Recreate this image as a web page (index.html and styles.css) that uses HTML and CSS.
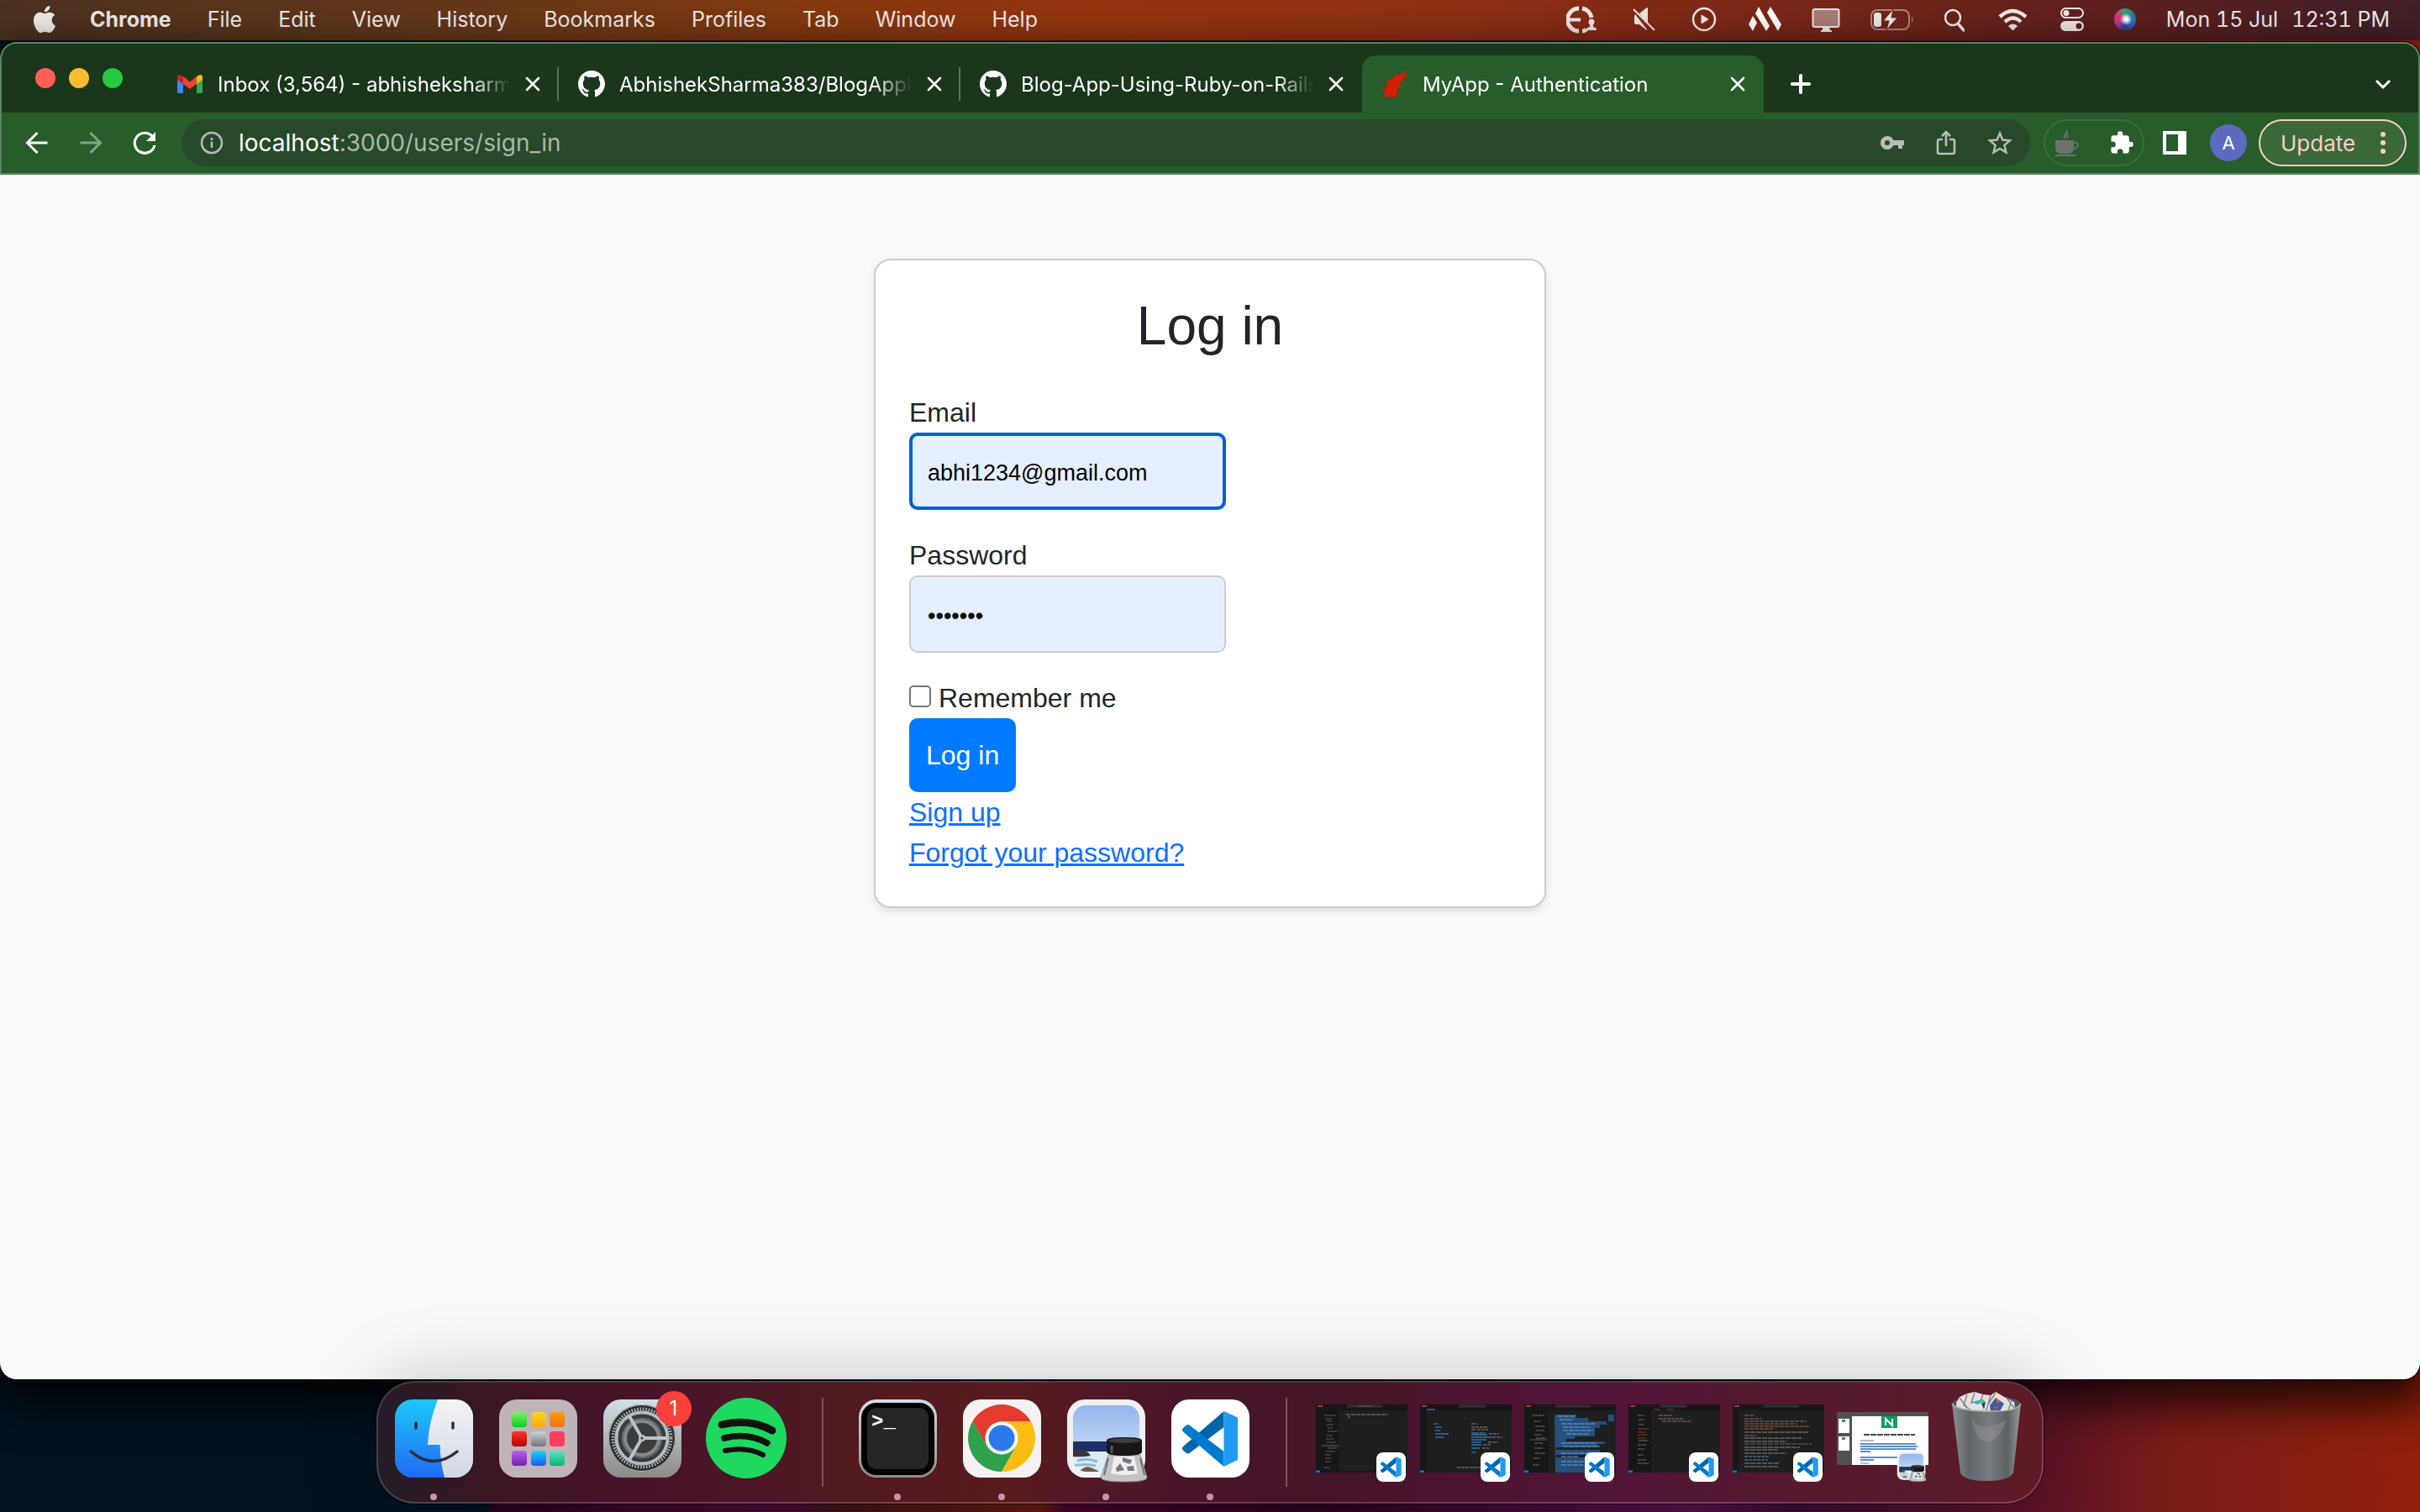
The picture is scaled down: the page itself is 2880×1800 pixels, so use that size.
FILE: index.html
```html
<!DOCTYPE html>
<html lang="en">
<head>
<meta charset="utf-8">
<title>MyApp - Authentication</title>
<link rel="stylesheet" href="styles.css">
</head>
<body>
<svg class="sprite" aria-hidden="true">
  <symbol id="github" viewBox="0 0 16 16"><path d="M8 0C3.58 0 0 3.58 0 8c0 3.54 2.29 6.53 5.47 7.59.4.07.55-.17.55-.38 0-.19-.01-.82-.01-1.49-2.01.37-2.53-.49-2.69-.94-.09-.23-.48-.94-.82-1.13-.28-.15-.68-.52-.01-.53.63-.01 1.08.58 1.23.82.72 1.21 1.87.87 2.33.66.07-.52.28-.87.51-1.07-1.78-.2-3.64-.89-3.64-3.95 0-.87.31-1.59.82-2.15-.08-.2-.36-1.02.08-2.12 0 0 .67-.21 2.2.82.64-.18 1.32-.27 2-.27s1.36.09 2 .27c1.53-1.04 2.2-.82 2.2-.82.44 1.1.16 1.92.08 2.12.51.56.82 1.27.82 2.15 0 3.07-1.87 3.75-3.65 3.95.29.25.54.73.54 1.48 0 1.07-.01 1.93-.01 2.2 0 .21.15.46.55.38A8.01 8.01 0 0 0 16 8c0-4.42-3.58-8-8-8z" fill="#fff"/></symbol>
  <symbol id="cross" viewBox="0 0 20 20"><path d="M3 3l14 14M17 3L3 17" stroke="#fff" stroke-width="2.6" stroke-linecap="round"/></symbol>
  <symbol id="vscode" viewBox="0 0 93 93">
    <rect width="93" height="93" rx="21" fill="#fff"/>
    <path d="M62.500 14L14 56q-2 2.500 0 4.500l4 3.500q2 1 4-.500L62.500 33z" fill="#0065a9"/>
    <path d="M62.500 80L14 38.500q-2-2.500 0-4.500l4-3.500q2-1 4 .500L62.500 62z" fill="#007acc"/>
    <path d="M62.500 14L79 21.500v50.500L62.500 80z" fill="#1f9cf0"/>
  </symbol>
  <symbol id="preview" viewBox="0 0 96 99">
    <rect width="93" height="93" rx="21" fill="#eff0f2"/>
    <clipPath id="photo"><rect x="7" y="7" width="79" height="79" rx="15"/></clipPath>
    <g clip-path="url(#photo)">
      <rect x="7" y="7" width="79" height="44" fill="url(#sky)"/>
      <rect x="7" y="50" width="79" height="14" fill="#1f2f66"/>
      <rect x="7" y="62" width="79" height="26" fill="#dcebf5"/>
      <path d="M7 61q9-2 18 2l3 4q-10 2-21 1z" fill="#39343c"/>
      <path d="M12 73q12-4 24 1M8 79q14-3 26 0" stroke="#8eb9d6" stroke-width="3" fill="none"/>
      <path d="M14 86q8-8 14-5l9 4v3H14z" fill="#6d5a48"/>
    </g>
    <path d="M49 66h38l8 27q0 5-27 5t-28-5z" fill="#c3c4c6" stroke="#8e8f91"/>
    <path d="M56 68h24l4 20q-16 4-32 0z" fill="#eceef0"/>
    <path d="M49 70l-5 20M87 70l5 20" stroke="#707173" stroke-width="2"/>
    <path d="M66 69l11 3-2 5-9-3zM58 82l5-6 5 8-9 2zM71 80l8-1 1 6-8 0z" fill="#76797e"/>
    <path d="M47 49q0-4 21-4t21 4v13q0 5-21 5t-21-5z" fill="#17181a"/>
    <ellipse cx="68" cy="49" rx="19" ry="3" fill="#3c3d40"/>
    <path d="M53 55v9" stroke="#53555a" stroke-width="3"/>
  </symbol>
  <defs>
    <linearGradient id="sky" x2="0" y2="1"><stop stop-color="#92b6ee"/><stop offset="1" stop-color="#bcd2f3"/></linearGradient>
    <linearGradient id="finderBlue" x2="0" y2="1"><stop stop-color="#1dc8fd"/><stop offset="1" stop-color="#1f6bf3"/></linearGradient>
    <linearGradient id="finderWhite" x2="0" y2="1"><stop stop-color="#f4f4f5"/><stop offset="1" stop-color="#cfd8e4"/></linearGradient>
    <linearGradient id="metal" x2="0" y2="1"><stop stop-color="#d3dfe6"/><stop offset="1" stop-color="#8d8a86"/></linearGradient>
    <linearGradient id="can" x2="1" y2="0"><stop stop-color="#8b8f92"/><stop offset=".25" stop-color="#62666a"/><stop offset=".55" stop-color="#7b7e81"/><stop offset=".8" stop-color="#5d6063"/><stop offset="1" stop-color="#999c9f"/></linearGradient>
    <linearGradient id="lime" x2="0" y2="1"><stop stop-color="#7df06c"/><stop offset="1" stop-color="#12cc1c"/></linearGradient>
    <linearGradient id="amber" x2="0" y2="1"><stop stop-color="#fdd22c"/><stop offset="1" stop-color="#fdab05"/></linearGradient>
    <linearGradient id="orange" x2="0" y2="1"><stop stop-color="#fc9c06"/><stop offset="1" stop-color="#ec7320"/></linearGradient>
    <linearGradient id="crimson" x2="0" y2="1"><stop stop-color="#fb3226"/><stop offset="1" stop-color="#b60303"/></linearGradient>
    <linearGradient id="silver" x2="0" y2="1"><stop stop-color="#c8d4da"/><stop offset="1" stop-color="#757575"/></linearGradient>
    <linearGradient id="violet" x2="0" y2="1"><stop stop-color="#c05bee"/><stop offset="1" stop-color="#7224ae"/></linearGradient>
    <linearGradient id="azure" x2="0" y2="1"><stop stop-color="#1bd6fd"/><stop offset="1" stop-color="#1e55ee"/></linearGradient>
    <linearGradient id="mint" x2="0" y2="1"><stop stop-color="#5ee0cc"/><stop offset="1" stop-color="#05b66c"/></linearGradient>
  </defs>
</svg>

<header class="menubar">
  <nav class="menus" aria-label="Menu bar">
    <svg class="apple" viewBox="0 0 24 24"><path d="M12.152 6.896c-.948 0-2.415-1.078-3.96-1.040-2.040.027-3.910 1.183-4.961 3.014-2.117 3.675-.546 9.103 1.519 12.090 1.013 1.454 2.208 3.090 3.792 3.039 1.520-.065 2.090-.987 3.935-.987 1.831 0 2.350.987 3.960.948 1.637-.026 2.676-1.480 3.676-2.948 1.156-1.688 1.636-3.325 1.662-3.415-.039-.013-3.182-1.221-3.220-4.857-.026-3.040 2.480-4.494 2.597-4.559-1.429-2.090-3.623-2.324-4.390-2.376-2-.156-3.675 1.090-4.610 1.090zM15.530 3.830c.843-1.012 1.400-2.427 1.245-3.830-1.207.052-2.662.805-3.532 1.818-.780.896-1.454 2.338-1.273 3.714 1.338.104 2.715-.688 3.559-1.701"/></svg>
    <button class="menu menu-app">Chrome</button>
    <button class="menu">File</button>
    <button class="menu">Edit</button>
    <button class="menu">View</button>
    <button class="menu">History</button>
    <button class="menu">Bookmarks</button>
    <button class="menu">Profiles</button>
    <button class="menu">Tab</button>
    <button class="menu">Window</button>
    <button class="menu">Help</button>
  </nav>
  <div class="status">
    <svg width="38" height="34" viewBox="0 0 38 34" fill="none" stroke="#f0e8e6" stroke-width="5"><path d="M15 4A13.500 13.500 0 0 0 15 31M19 4A13.500 13.500 0 0 1 30 15"/><path d="M3 17.500h14" stroke-width="4"/><path d="M19 31q3 0 5-2"/><g fill="#f0e8e6" stroke="none"><circle cx="30" cy="20" r="3.500"/><path d="M28 22h4v4q5 1 4 4H24q-1-3 4-4z"/></g></svg>
    <svg width="38" height="34" viewBox="0 0 38 34" fill="#f0e8e6"><path d="M8 11l14 18q0 1-1 .500L13 23H9q-2 0-2-2v-8zM13 10l9-7q1-.500 1 1v18z"/><path d="M6 5l25 25" stroke="#f0e8e6" stroke-width="2"/></svg>
    <svg width="32" height="34" viewBox="0 0 32 34" fill="none" stroke="#f0e8e6" stroke-width="2.500"><circle cx="16" cy="17" r="13"/><path d="M13 12v10l8-5z" fill="#f0e8e6" stroke-width="1"/></svg>
    <svg width="40" height="34" viewBox="0 0 40 34" fill="#fff"><path d="M6 13l5 8-5 10-5-8zM13 2l13 23-4 6L9 10zM27 2l13 21-4 8L23 9z"/></svg>
    <svg width="34" height="34" viewBox="0 0 34 34"><rect x="1.500" y="5" width="31" height="21" rx="2" fill="#f0e8e6" fill-opacity=".45" stroke="#f0e8e6" stroke-width="2"/><path d="M13 26h8l1 4h2v2H11v-2h2z" fill="#f0e8e6"/></svg>
    <svg width="52" height="34" viewBox="0 0 52 34"><rect x="1" y="6" width="45" height="23" rx="7" fill="none" stroke="#f0e8e6" stroke-opacity=".5" stroke-width="2"/><path d="M49 13q3 4 0 8z" fill="#f0e8e6" fill-opacity=".5"/><rect x="4" y="9" width="9" height="17" rx="3" fill="#f0e8e6"/><path d="M27 5L15 19h7l-3 11 13-15h-7z" fill="#f0e8e6" stroke="#752819" stroke-width="1"/></svg>
    <svg width="24" height="34" viewBox="0 0 24 34" fill="none" stroke="#f0e8e6" stroke-width="2.500"><circle cx="10" cy="15" r="9"/><path d="M16 22l7 8" stroke-width="3.500" stroke-linecap="round"/></svg>
    <svg width="42" height="34" viewBox="0 0 42 34" fill="none" stroke="#f0e8e6" stroke-width="4.500"><path d="M6 14q15-14 31 0M12 20q10-9 19 0"/><path d="M21.500 30l-5-5q5-4 10 0z" fill="#f0e8e6" stroke-width="1"/></svg>
    <svg width="28" height="34" viewBox="0 0 28 34"><rect x="1" y="4" width="26" height="11" rx="5.500" fill="none" stroke="#f0e8e6" stroke-width="2"/><circle cx="7" cy="9.500" r="3.500" fill="#f0e8e6"/><rect y="19" width="28" height="12" rx="6" fill="#f0e8e6"/><circle cx="22" cy="25" r="3.500" fill="#5b2020"/></svg>
    <span class="siri"></span>
    <time class="clock"><span>Mon 15 Jul</span><span>12:31 PM</span></time>
  </div>
</header>

<main class="browser">
  <div class="chrome">
    <div class="tabstrip">
      <div class="lights"><i class="light red"></i><i class="light yellow"></i><i class="light green"></i></div>
      <div class="tab">
        <svg class="favicon" viewBox="0 0 32 32"><path d="M1 8v17q0 2 2 2h5V13z" fill="#4285f4"/><path d="M31 8v17q0 2-2 2h-5V13z" fill="#34a853"/><path d="M1 8q0-3 3-3l4 2v9l-7-5z" fill="#c5221f"/><path d="M31 8q0-3-3-3l-4 2v9l7-5z" fill="#fbbc04"/><path d="M8 7l8 6.500L24 7v9l-8 6-8-6z" fill="#ea4335"/></svg>
        <span class="tab-title">Inbox (3,564) - abhisheksharma</span>
        <button class="icon-btn tab-close" aria-label="Close tab"><svg width="20" height="20"><use href="#cross"/></svg></button>
      </div>
      <div class="tab">
        <svg class="favicon"><use href="#github"/></svg>
        <span class="tab-title">AbhishekSharma383/BlogApplication</span>
        <button class="icon-btn tab-close" aria-label="Close tab"><svg width="20" height="20"><use href="#cross"/></svg></button>
      </div>
      <div class="tab tab-last">
        <svg class="favicon"><use href="#github"/></svg>
        <span class="tab-title">Blog-App-Using-Ruby-on-Rails</span>
        <button class="icon-btn tab-close" aria-label="Close tab"><svg width="20" height="20"><use href="#cross"/></svg></button>
      </div>
      <div class="tab tab-active">
        <svg class="favicon" viewBox="0 0 32 32" fill="#d81e05"><path d="M3 31Q5 17 12 10 19 3 31 4v2Q20 10 18 31z"/><path d="M1 19l3 1v4l-3-1zM7 10l3 2-1 3-3-2zM15 4l3 0 1 2-3 1zM24 1h4l-1 2h-3zM24 12l3 1v2l-3-1zM21 17l3 1v3l-3-1zM20 27l2 1v2l-2-1z"/></svg>
        <span class="tab-title">MyApp - Authentication</span>
        <button class="icon-btn tab-close" aria-label="Close tab"><svg width="20" height="20"><use href="#cross"/></svg></button>
      </div>
      <button class="icon-btn new-tab" aria-label="New tab"><svg width="24" height="24" viewBox="0 0 24 24"><path d="M12 2v20M2 12h20" stroke="#fff" stroke-width="4" stroke-linecap="round"/></svg></button>
      <button class="icon-btn tab-search" aria-label="Search tabs"><svg width="20" height="14" viewBox="0 0 20 14" fill="none"><path d="M2 3l8 8 8-8" stroke="#fff" stroke-width="3"/></svg></button>
    </div>
    <div class="toolbar">
      <button class="icon-btn nav-btn" aria-label="Back"><svg width="28" height="28" viewBox="0 0 28 28" fill="none" stroke="#fff" stroke-width="3"><path d="M26.500 14H3M14.500 2L2.500 14l12 12"/></svg></button>
      <button class="icon-btn nav-btn" aria-label="Forward"><svg width="28" height="28" viewBox="0 0 28 28" fill="none" stroke="#84a285" stroke-width="3"><path d="M1.500 14H25M13.500 2l12 12-12 12"/></svg></button>
      <button class="icon-btn nav-btn" aria-label="Reload"><svg width="28" height="28" viewBox="0 0 28 28" fill="none" stroke="#fff" stroke-width="3.200"><path d="M23.500 6.500A12 12 0 1 0 26 17"/><path d="M27 1v11H16z" fill="#fff" stroke="none"/></svg></button>
      <div class="omnibox">
        <svg width="28" height="28" viewBox="0 0 28 28" fill="none" stroke="#b5b9bd" stroke-width="2.600"><circle cx="14" cy="14" r="12"/><path d="M14 12.500V20M14 8v3"/></svg>
        <span class="url"><b>localhost</b>:3000/users/sign_in</span>
        <button class="icon-btn omni-btn" aria-label="Passwords"><svg width="28" height="18" viewBox="0 0 28 18" fill="#b9bcbb"><path fill-rule="evenodd" d="M8 1a8 8 0 1 0 7.300 11H21v4h5v-4h2V6H15.300A8 8 0 0 0 8 1zm0 5a3 3 0 1 1 0 6 3 3 0 0 1 0-6z"/></svg></button>
        <button class="icon-btn omni-btn" aria-label="Share"><svg width="24" height="30" viewBox="0 0 24 30" fill="none" stroke="#b9bcbb" stroke-width="2.600"><path d="M8 11H4q-2 0-2 2v13q0 2 2 2h16q2 0 2-2V13q0-2-2-2h-4M12 19V3M7 7l5-5 5 5"/></svg></button>
        <button class="icon-btn omni-btn" aria-label="Bookmark"><svg width="30" height="30" viewBox="0 0 30 30" fill="none" stroke="#b9bcbb" stroke-width="2.500"><path d="M15 3.500l3.300 8 8.700.700-6.600 5.700 2 8.500L15 22l-7.400 4.400 2-8.500L3 12.200l8.700-.700z"/></svg></button>
      </div>
      <div class="extensions">
        <button class="icon-btn" aria-label="Coffee extension"><svg width="32" height="34" viewBox="0 0 32 34" fill="#6e7370"><path d="M2 14h22v8q0 8-7 8H9q-7 0-7-8zM2 31h24v2H2z"/><path d="M24 17q6-1 5 3t-7 4" fill="none" stroke="#6e7370" stroke-width="2"/><path d="M14 12q-3-3 0-5t1-5M17 11q-2-2 0-4" fill="none" stroke="#6e7370" stroke-width="2"/></svg></button>
        <button class="icon-btn" aria-label="Extensions"><svg width="30" height="30" viewBox="0 0 24 24" fill="#fff"><path d="M20.500 11H19V7c0-1.100-.900-2-2-2h-4V3.500a2.500 2.500 0 0 0-5 0V5H4c-1.100 0-2 .900-2 2v3.800h1.500a2.700 2.700 0 0 1 0 5.400H2V20c0 1.100.900 2 2 2h3.800v-1.500a2.700 2.700 0 0 1 5.400 0V22H17c1.100 0 2-.900 2-2v-4h1.500a2.500 2.500 0 0 0 0-5z"/></svg></button>
      </div>
      <button class="icon-btn panel-btn" aria-label="Side panel"><svg width="28" height="28" viewBox="0 0 28 28" fill="#fff"><path fill-rule="evenodd" d="M0 0h28v28H0zM4 4v20h14V4z"/></svg></button>
      <button class="avatar">A</button>
      <button class="update">Update<svg width="8" height="28" viewBox="0 0 8 28" fill="#f9cfc6"><circle cx="4" cy="4" r="3"/><circle cx="4" cy="14" r="3"/><circle cx="4" cy="24" r="3"/></svg></button>
    </div>
  </div>

  <section class="page">
    <form class="card">
      <h2>Log in</h2>
      <div class="field">
        <label for="email">Email</label>
        <input class="textbox focused" id="email" type="email" value="abhi1234@gmail.com">
      </div>
      <div class="field">
        <label for="password">Password</label>
        <input class="textbox" id="password" type="password" value="abhi123">
      </div>
      <div class="remember">
        <input type="checkbox" id="remember"><label for="remember">Remember me</label>
      </div>
      <button class="submit" type="button">Log in</button>
      <a href="#signup">Sign up</a>
      <a href="#forgot">Forgot your password?</a>
    </form>
  </section>
</main>

<footer class="dock-area">
  <div class="dock">
    <div class="slot running"><svg width="93" height="93" viewBox="0 0 93 93">
      <clipPath id="tile"><rect width="93" height="93" rx="21"/></clipPath>
      <g clip-path="url(#tile)"><rect width="93" height="93" fill="url(#finderBlue)"/><path d="M51 0Q40 28 39 54h14.500Q54 75 59 93h34V0z" fill="url(#finderWhite)"/></g>
      <path d="M25 28v6M69 28v6M19 62q27 23 55 0" fill="none" stroke="#2c2d33" stroke-width="3.500" stroke-linecap="round"/></svg></div>
    <div class="slot"><svg width="93" height="93" viewBox="0 0 93 93"><rect width="93" height="93" rx="21" fill="#c0b3ba"/>
      <rect x="15" y="15" width="18" height="18" rx="4" fill="url(#lime)"/><rect x="38" y="15" width="18" height="18" rx="4" fill="url(#amber)"/><rect x="60" y="15" width="18" height="18" rx="4" fill="url(#orange)"/>
      <rect x="15" y="38" width="18" height="18" rx="4" fill="url(#crimson)"/><rect x="38" y="38" width="18" height="18" rx="4" fill="url(#silver)"/><rect x="60" y="38" width="18" height="18" rx="4" fill="#fc3e5c"/>
      <rect x="15" y="61" width="18" height="18" rx="4" fill="url(#violet)"/><rect x="38" y="61" width="18" height="18" rx="4" fill="url(#azure)"/><rect x="60" y="61" width="18" height="18" rx="4" fill="url(#mint)"/></svg></div>
    <div class="slot"><span class="badged"><svg width="93" height="93" viewBox="0 0 93 93"><rect width="93" height="93" rx="21" fill="url(#metal)"/>
      <circle cx="46" cy="46" r="40" fill="#2a2c2e"/><circle cx="46" cy="46" r="39.500" fill="none" stroke="#c3cacd" stroke-width="1"/>
      <circle cx="46" cy="46" r="34.500" fill="none" stroke="#a9afb2" stroke-width="4" stroke-dasharray="1.700 1.700"/>
      <circle cx="46" cy="46" r="30.500" fill="none" stroke="#b4babd" stroke-width="4"/>
      <circle cx="46" cy="46" r="28" fill="#3a3c3e"/>
      <circle cx="46" cy="46" r="23" fill="none" stroke="#888d90" stroke-width="2" stroke-dasharray="1.500 1"/>
      <circle cx="46" cy="46" r="20" fill="none" stroke="#85898c" stroke-width="4"/>
      <path d="M46 46h30M46 46L31 20M46 46L31 72" stroke="#bcc2c5" stroke-width="4"/><circle cx="46" cy="46" r="4" fill="#bcc2c5"/><circle cx="46" cy="46" r="1.500" fill="#333"/></svg><span class="badge">1</span></span></div>
    <div class="slot"><svg width="96" height="96" viewBox="0 0 96 96" fill="none" stroke="#121212" stroke-linecap="round"><circle cx="48" cy="48" r="48" fill="#1fd860" stroke="none"/><path d="M19 32Q52 24 79 39" stroke-width="9"/><path d="M22 48q28-7 51 6" stroke-width="7.500"/><path d="M23 63q26-5 45 5" stroke-width="6"/></svg></div>
    <span class="divider"></span>
    <div class="slot running"><svg width="93" height="93" viewBox="0 0 93 93"><rect width="93" height="93" rx="21" fill="url(#metal)"/><rect x="3" y="4" width="87" height="86" rx="18" fill="#000"/><rect x="10" y="10" width="73" height="73" rx="11" fill="#262626"/><text class="prompt" x="15" y="33">&gt;_</text></svg></div>
    <div class="slot running"><svg width="93" height="93" viewBox="0 0 93 93"><rect width="93" height="93" rx="21" fill="#f5f3f2"/>
      <path d="M46 46V26h34.600A40 40 0 0 0 11.400 26L28.700 56z" fill="#e33b2e"/><path d="M46 46L28.700 56 11.400 26A40 40 0 0 0 46 86L63.300 56z" fill="#2da14c"/><path d="M46 46l17.300 10L46 86A40 40 0 0 0 80.600 26H46z" fill="#fdbc12"/>
      <circle cx="46" cy="46" r="19.500" fill="#fff"/><circle cx="46" cy="46" r="15.500" fill="#2b7bee"/></svg></div>
    <div class="slot running"><svg class="preview-app" width="96" height="99"><use href="#preview"/></svg></div>
    <div class="slot running"><svg width="93" height="93"><use href="#vscode"/></svg></div>
    <span class="divider"></span>
    <div class="slot"><span class="badged"><svg class="thumb" viewBox="0 0 109 81"><rect width="109" height="81" fill="#1f1f1f"/><path d="M0 0h109v7H0zM0 7h27v72H0zM0 79h109v2H0z" fill="#171717"/><path d="M37 2h42" stroke="#333" stroke-width="3"/><path d="M10 13h14M11 17h8M13 20h6M13 24h8M14 28h6M14 32h12M13 37h7M12 41h9M13 45h11M14 52h12M12 56h11M11 60h7M11 64h8M11 68h6M9 75h8M50 2h18" stroke="#666" stroke-width="1" stroke-dasharray="3 .5"/><path d="M7 49h20" stroke="#3a3a42" stroke-width="2.500"/><path d="M36 12h50M38 15h3" stroke="#888" stroke-dasharray="5 1"/><path d="M0 80h5" stroke="#0078d4" stroke-width="3"/><path d="M2 2h6" stroke="#c85032" stroke-width="1.500"/></svg><svg class="mini"><use href="#vscode"/></svg></span></div>
    <div class="slot"><span class="badged"><svg class="thumb" viewBox="0 0 109 81"><rect width="109" height="81" fill="#1f1f1f"/><path d="M0 0h109v7H0zM0 7h7v74H0z" fill="#171717"/><path d="M46 2h32" stroke="#333" stroke-width="3"/><path d="M16 23h6M61 23h7M66 27h14M68 30h13M66 34h12M82 35h12M86 39h12M81 45h12M75 48h9M74 52h8M44 75h28" stroke="#888" stroke-dasharray="4 1"/><path d="M18 27h8M18 31h6M18 35h16M18 39h10M61 27h4M61 30h5M61 34h5M61 36h19M61 39h24M61 42h18M61 45h12M61 48h12M61 52h10M61 57h5M8 6h10" stroke="#2b73ad" stroke-width="1.300"/><path d="M0 80h5" stroke="#0078d4" stroke-width="3"/><path d="M2 2h6" stroke="#c85032" stroke-width="1.500"/></svg><svg class="mini"><use href="#vscode"/></svg></span></div>
    <div class="slot"><span class="badged"><svg class="thumb" viewBox="0 0 109 81"><rect width="109" height="81" fill="#1f1f1f"/><path d="M0 0h109v7H0zM0 7h29v74H0z" fill="#171717"/><path d="M37 2h42" stroke="#333" stroke-width="3"/><path d="M36 12h26v4h14v4h22v4h-8v4h-6v10H60v3H50v3h46v3h-8v4H38v3h52v3h8v3H38v3h50v3h-6v3h15v12H37z" fill="#264f7b"/><path d="M40 14h20M42 18h16M44 23h40M46 27h32M46 31h36M50 35h28M44 46h42M46 50h44M44 58h42M44 62h20M44 68h32M44 72h26" stroke="#6fa7d6" stroke-dasharray="6 1"/><path d="M10 13h14M12 20h8M13 26h12M14 31h10M12 36h8M14 40h12M12 46h10M12 52h10M13 58h12M11 64h8M10 72h8" stroke="#777" stroke-dasharray="3 .5"/><path d="M7 42h20" stroke="#3a3a42" stroke-width="2"/><path d="M100 12h7v8h-7z" fill="#264f7b"/><path d="M0 80h5" stroke="#0078d4" stroke-width="3"/><path d="M2 2h6" stroke="#c85032" stroke-width="1.500"/></svg><svg class="mini"><use href="#vscode"/></svg></span></div>
    <div class="slot"><span class="badged"><svg class="thumb" viewBox="0 0 109 81"><rect width="109" height="81" fill="#1f1f1f"/><path d="M0 0h109v7H0zM0 7h27v74H0z" fill="#171717"/><path d="M37 2h32" stroke="#333" stroke-width="3"/><path d="M36 13h16M40 20h34" stroke="#9c6b54" stroke-dasharray="5 1"/><path d="M36 17h30" stroke="#4d8fbf" stroke-dasharray="4 1"/><path d="M11 13h8M12 18h6M12 24h6M12 43h12M11 48h10M11 53h8M11 60h6M11 66h10M11 70h14" stroke="#777" stroke-dasharray="3 .5"/><path d="M11 29h14M11 33h10M11 36h12M11 40h10M30 6h8M46 6h8" stroke="#8a3a36"/><path d="M0 80h5" stroke="#0078d4" stroke-width="3"/><path d="M2 2h6" stroke="#c85032" stroke-width="1.500"/></svg><svg class="mini"><use href="#vscode"/></svg></span></div>
    <div class="slot"><span class="badged"><svg class="thumb" viewBox="0 0 109 81"><rect width="109" height="81" fill="#1f1f1f"/><path d="M0 0h109v7H0zM0 7h7v74H0z" fill="#171717"/><path d="M37 2h42" stroke="#333" stroke-width="3"/><path d="M14 13h12M14 17h20M14 20h74M14 23h62M14 26h78M14 29h34M14 37h14" stroke="#9c6b54" stroke-dasharray="5 1"/><path d="M14 33h76M14 40h68M14 44h50M14 51h66M14 54h40M14 58h50M14 70h42M14 74h40" stroke="#888" stroke-dasharray="6 1"/><path d="M14 47h80" stroke="#477a3f" stroke-dasharray="6 1"/><path d="M14 62h30M14 66h28" stroke="#4d8fbf" stroke-dasharray="4 1"/><path d="M0 80h5" stroke="#0078d4" stroke-width="3"/><path d="M2 2h6" stroke="#c85032" stroke-width="1.500"/></svg><svg class="mini"><use href="#vscode"/></svg></span></div>
    <div class="slot"><span class="badged"><svg class="thumb" viewBox="0 0 109 81"><rect y="9" width="109" height="63" fill="#fff"/><path d="M0 9h109v5H0zM0 14h18v58H0z" fill="#55504d"/><path d="M2 17h13v17H2zM2 38h13v17H2z" fill="#fff"/><path d="M53 14h19v14H53zM6 18h4v3H6zM6 39h4v3H6z" fill="#0f9d67"/><path d="M58 25v-8l8 8v-8" fill="none" stroke="#fff" stroke-width="2"/><path d="M32 36h61" stroke="#444" stroke-width="2" stroke-dasharray="7 1"/><path d="M28 43h16M28 70h10" stroke="#777"/><path d="M28 47h66M28 50h68M28 53h66M28 56h12M28 63h62M28 66h16" stroke="#5c8fcb" stroke-width="2"/></svg><svg class="mini mini-preview" viewBox="0 0 96 99"><use href="#preview"/></svg></span></div>
    <div class="slot trash"><svg width="84" height="108" viewBox="0 0 84 108"><ellipse cx="42" cy="15" rx="41" ry="9" fill="#505356"/>
      <path d="M6 14l4-7 9-4 9-2 10 3 9 1 6-4 12 7 10 5 1 8q-35 9-69 2z" fill="#e2e2e1"/>
      <path d="M10 8l10 13M19 4l-4 13 10 7M28 2l-4 12 12-3M38 4l-3 8M47 5l-5 18M53 2l-9 14M66 8l10 14M72 11l-4 12" stroke="#85878a" stroke-width="1.500" fill="none"/>
      <path d="M26 13l12-3 3 3-11 3z" fill="#27b8d8"/><path d="M33 10l6 1-3 3z" fill="#54c457"/><path d="M36 15l5-2-2 9z" fill="#3c3c3e"/>
      <path d="M46 17l7-9 10 7-5 9-11 0z" fill="#3e5ca6"/><path d="M53 8l6 4-4 3z" fill="#d55e35"/><path d="M50 18l6 1-2 4z" fill="#c94a33"/>
      <path d="M1 15q5 8 41 9t41-9l-9 82q-4 10-32 10T11 97z" fill="url(#can)"/><path d="M1 15q5 8 41 9t41-9" fill="none" stroke="#b1b4b6" stroke-width="1.500"/><path d="M24 32q8 14 22 10t20-8q-8 24-22 26T24 32z" fill="#a4a7aa" opacity=".3"/></svg></div>
  </div>
</footer>
</body>
</html>
```

FILE: styles.css
```css
* { box-sizing: border-box; }

body {
  margin: 0;
  min-height: 100vh;
  display: flex;
  flex-direction: column;
  font-family: Inter, "Liberation Sans", sans-serif;
  background: linear-gradient(to right, #02131f 0, #02131f 20%, #2b0020 20.500%, #4c0b32 33%, #3c1018 34%, #63190f 43%, #46002a 44%, #2c001c 54%, #55104a 70%, #3b0b30 74%, #5c1328 84%, #7a1c18 90%, #911f09 100%);
}

.sprite { position: absolute; width: 0; height: 0; }
svg { display: block; flex: none; }

button {
  border: 0;
  padding: 0;
  margin: 0;
  background: none;
  font: inherit;
  color: inherit;
}

.icon-btn { display: flex; align-items: center; justify-content: center; flex: none; }

/* Menu bar */
.menubar {
  height: 48px;
  flex: none;
  display: flex;
  align-items: center;
  justify-content: space-between;
  padding: 0 36px 2px 37px;
  font-size: 25px;
  color: #f2ebe8;
  background: linear-gradient(to right, #4b3120 0, #663819 20%, #84390f 33%, #973410 45%, #8f2f12 60%, #7c2817 72%, #61201e 86%, #402028 100%);
}
.menus { display: flex; align-items: center; gap: 43px; text-shadow: 0 2px 4px rgba(0, 0, 0, .3); }
.menu-app { font-weight: 700; }
.apple { width: 32px; height: 32px; margin-right: -5px; fill: #f0ebe8; }
.status { display: flex; align-items: center; gap: 36px; }
.siri {
  width: 26px;
  height: 26px;
  border-radius: 50%;
  background:
    radial-gradient(circle at 55% 50%, #fff 0 10%, transparent 38%),
    conic-gradient(#2aa775, #2b7a9a, #2a6fd0, #23408f, #b43a9d, #e0356d, #2aa775);
}
.clock { display: flex; gap: 16px; font-variant-numeric: tabular-nums; }

/* Browser window */
.browser {
  flex: 1;
  display: flex;
  flex-direction: column;
  margin-top: 2px;
  border-radius: 20px;
  box-shadow: 0 0 0 1px #000, 0 20px 50px 10px rgba(0, 0, 0, .75);
}
.chrome {
  border: 2px solid #5b8562;
  border-radius: 20px 20px 0 0;
  background: #275c2b;
  overflow: hidden;
  color: #fff;
}
.tabstrip {
  display: flex;
  align-items: flex-end;
  height: 82px;
  padding: 0 30px 0 40px;
  background: #1a371b;
}
.lights { display: flex; gap: 16px; width: 145px; height: 82px; padding-top: 29px; flex: none; }
.light { width: 24px; height: 24px; border-radius: 50%; }
.red { background: #ff5f57; }
.yellow { background: #febc2e; }
.green { background: #28c840; }

.tab {
  position: relative;
  display: flex;
  align-items: center;
  flex: 0 1 478px;
  min-width: 0;
  height: 68px;
  padding: 0 18px 0 23px;
  font-size: 24px;
}
.tab::after {
  content: "";
  position: absolute;
  right: 0;
  top: 14px;
  width: 2px;
  height: 40px;
  background: #587158;
}
.tab-last::after, .tab-active::after { display: none; }
.tab-active { background: #275c2b; border-radius: 16px 16px 0 0; }
.favicon { width: 32px; height: 32px; margin-right: 17px; }
.tab-title {
  flex: 1;
  min-width: 0;
  overflow: hidden;
  white-space: nowrap;
  mask-image: linear-gradient(to left, transparent 0, #000 44px);
}
.tab-close { width: 26px; height: 26px; margin-left: 14px; }
.new-tab { width: 88px; height: 68px; }
.tab-search { width: 24px; height: 68px; margin-left: auto; }

.toolbar {
  display: flex;
  align-items: center;
  height: 72px;
  padding: 0 14px 0 10px;
}
.nav-btn { width: 64px; height: 56px; }
.omnibox {
  flex: 1;
  display: flex;
  align-items: center;
  height: 56px;
  margin: 0 16px 0 12px;
  padding: 0 4px 0 22px;
  border-radius: 28px;
  background: #274929;
}
.url { flex: 1; margin-left: 18px; font-size: 28px; color: #a9b8aa; }
.url b { font-weight: 400; color: #fff; }
.omni-btn { width: 64px; height: 56px; }
.extensions {
  display: flex;
  align-items: center;
  justify-content: space-between;
  width: 120px;
  height: 56px;
  padding: 0 10px;
  border: 2px solid #3d6d42;
  border-radius: 28px;
}
.panel-btn { width: 72px; height: 56px; }
.avatar {
  width: 44px;
  height: 44px;
  margin: 0 14px 0 6px;
  border-radius: 50%;
  background: #5c6bc0;
  font-size: 22px;
}
.update {
  display: flex;
  align-items: center;
  justify-content: space-between;
  width: 176px;
  height: 56px;
  padding: 0 22px 0 24px;
  border: 2px solid #f9cfc6;
  border-radius: 28px;
  background: #3b683b;
  color: #f9cfc6;
  font-size: 26px;
}

/* Sign-in page */
.page {
  flex: 1;
  padding: 100px 20px;
  border-radius: 0 0 20px 20px;
  background: #f8f9fa;
  font-family: "Liberation Sans", Arial, sans-serif;
  font-size: 32px;
  line-height: 48px;
  color: #212529;
}
.card {
  display: flex;
  flex-direction: column;
  align-items: flex-start;
  max-width: 800px;
  margin: 0 auto;
  padding: 40px;
  border: 2px solid #ccc;
  border-radius: 20px;
  background: #fff;
  box-shadow: 0 4px 10px rgba(0, 0, 0, .1);
}
.card h2 { align-self: center; margin: 0 0 40px; font-size: 64px; font-weight: 400; line-height: 77px; }
.field { display: flex; flex-direction: column; margin-bottom: 30px; }
.textbox {
  width: 377px;
  height: 92px;
  padding: 4px 20px 0;
  border: 2px solid #ccc;
  border-radius: 10px;
  background: #e6efff;
  font-family: inherit;
  font-size: 27px;
  color: #000;
}
.focused { outline: 4px solid #0060d0; outline-offset: -4px; }
.remember { display: flex; align-items: center; gap: 9px; }
.remember input {
  appearance: none;
  width: 26px;
  height: 26px;
  margin: 0 0 4px;
  border: 2px solid #767676;
  border-radius: 5px;
  background: #fff;
}
.submit { padding: 20px; border-radius: 10px; background: #007bff; color: #fff; }
.card a { color: #0d6efd; text-decoration-thickness: 3px; }

/* Dock */
.dock-area { position: relative; display: flex; justify-content: center; padding: 2px 20px 10px; }
.dock {
  display: flex;
  align-items: center;
  height: 146px;
  padding: 0 4px;
  border: 2px solid rgba(190, 140, 155, .4);
  border-radius: 46px;
  background: linear-gradient(to right, #241d27 0, #3c1523 7%, #47132b 16%, #501a20 28%, #581a1e 38%, #4a152c 48%, #451528 56%, #521538 74%, #561a2e 88%, #5e1b25 100%) padding-box;
  box-shadow: 0 0 0 1px rgba(0, 0, 0, .6), 0 0 90px rgba(0, 0, 0, .22);
}
.slot { position: relative; display: flex; align-items: center; justify-content: center; width: 124px; height: 142px; padding-bottom: 10px; }
.trash { padding-bottom: 14px; }
.running::after {
  content: "";
  position: absolute;
  left: 58px;
  bottom: 2px;
  width: 8px;
  height: 8px;
  border-radius: 50%;
  background: #c993a5;
}
.divider { width: 2px; height: 106px; margin: 0 26px 0 28px; background: #83505f; }
.preview-app { margin: 6px 0 0 3px; }
.prompt { font: bold 24px "Liberation Mono", monospace; fill: #fff; }
.badged { position: relative; display: block; }
.badge {
  position: absolute;
  top: -10px;
  right: -12px;
  width: 42px;
  height: 42px;
  border-radius: 50%;
  background: #f9403a;
  color: #fff;
  font-size: 24px;
  line-height: 42px;
  text-align: center;
}
.thumb { width: 109px; height: 81px; }
.mini { position: absolute; right: 2px; bottom: -11px; width: 35px; height: 35px; }
.mini-preview { width: 36px; height: 36px; }
```
